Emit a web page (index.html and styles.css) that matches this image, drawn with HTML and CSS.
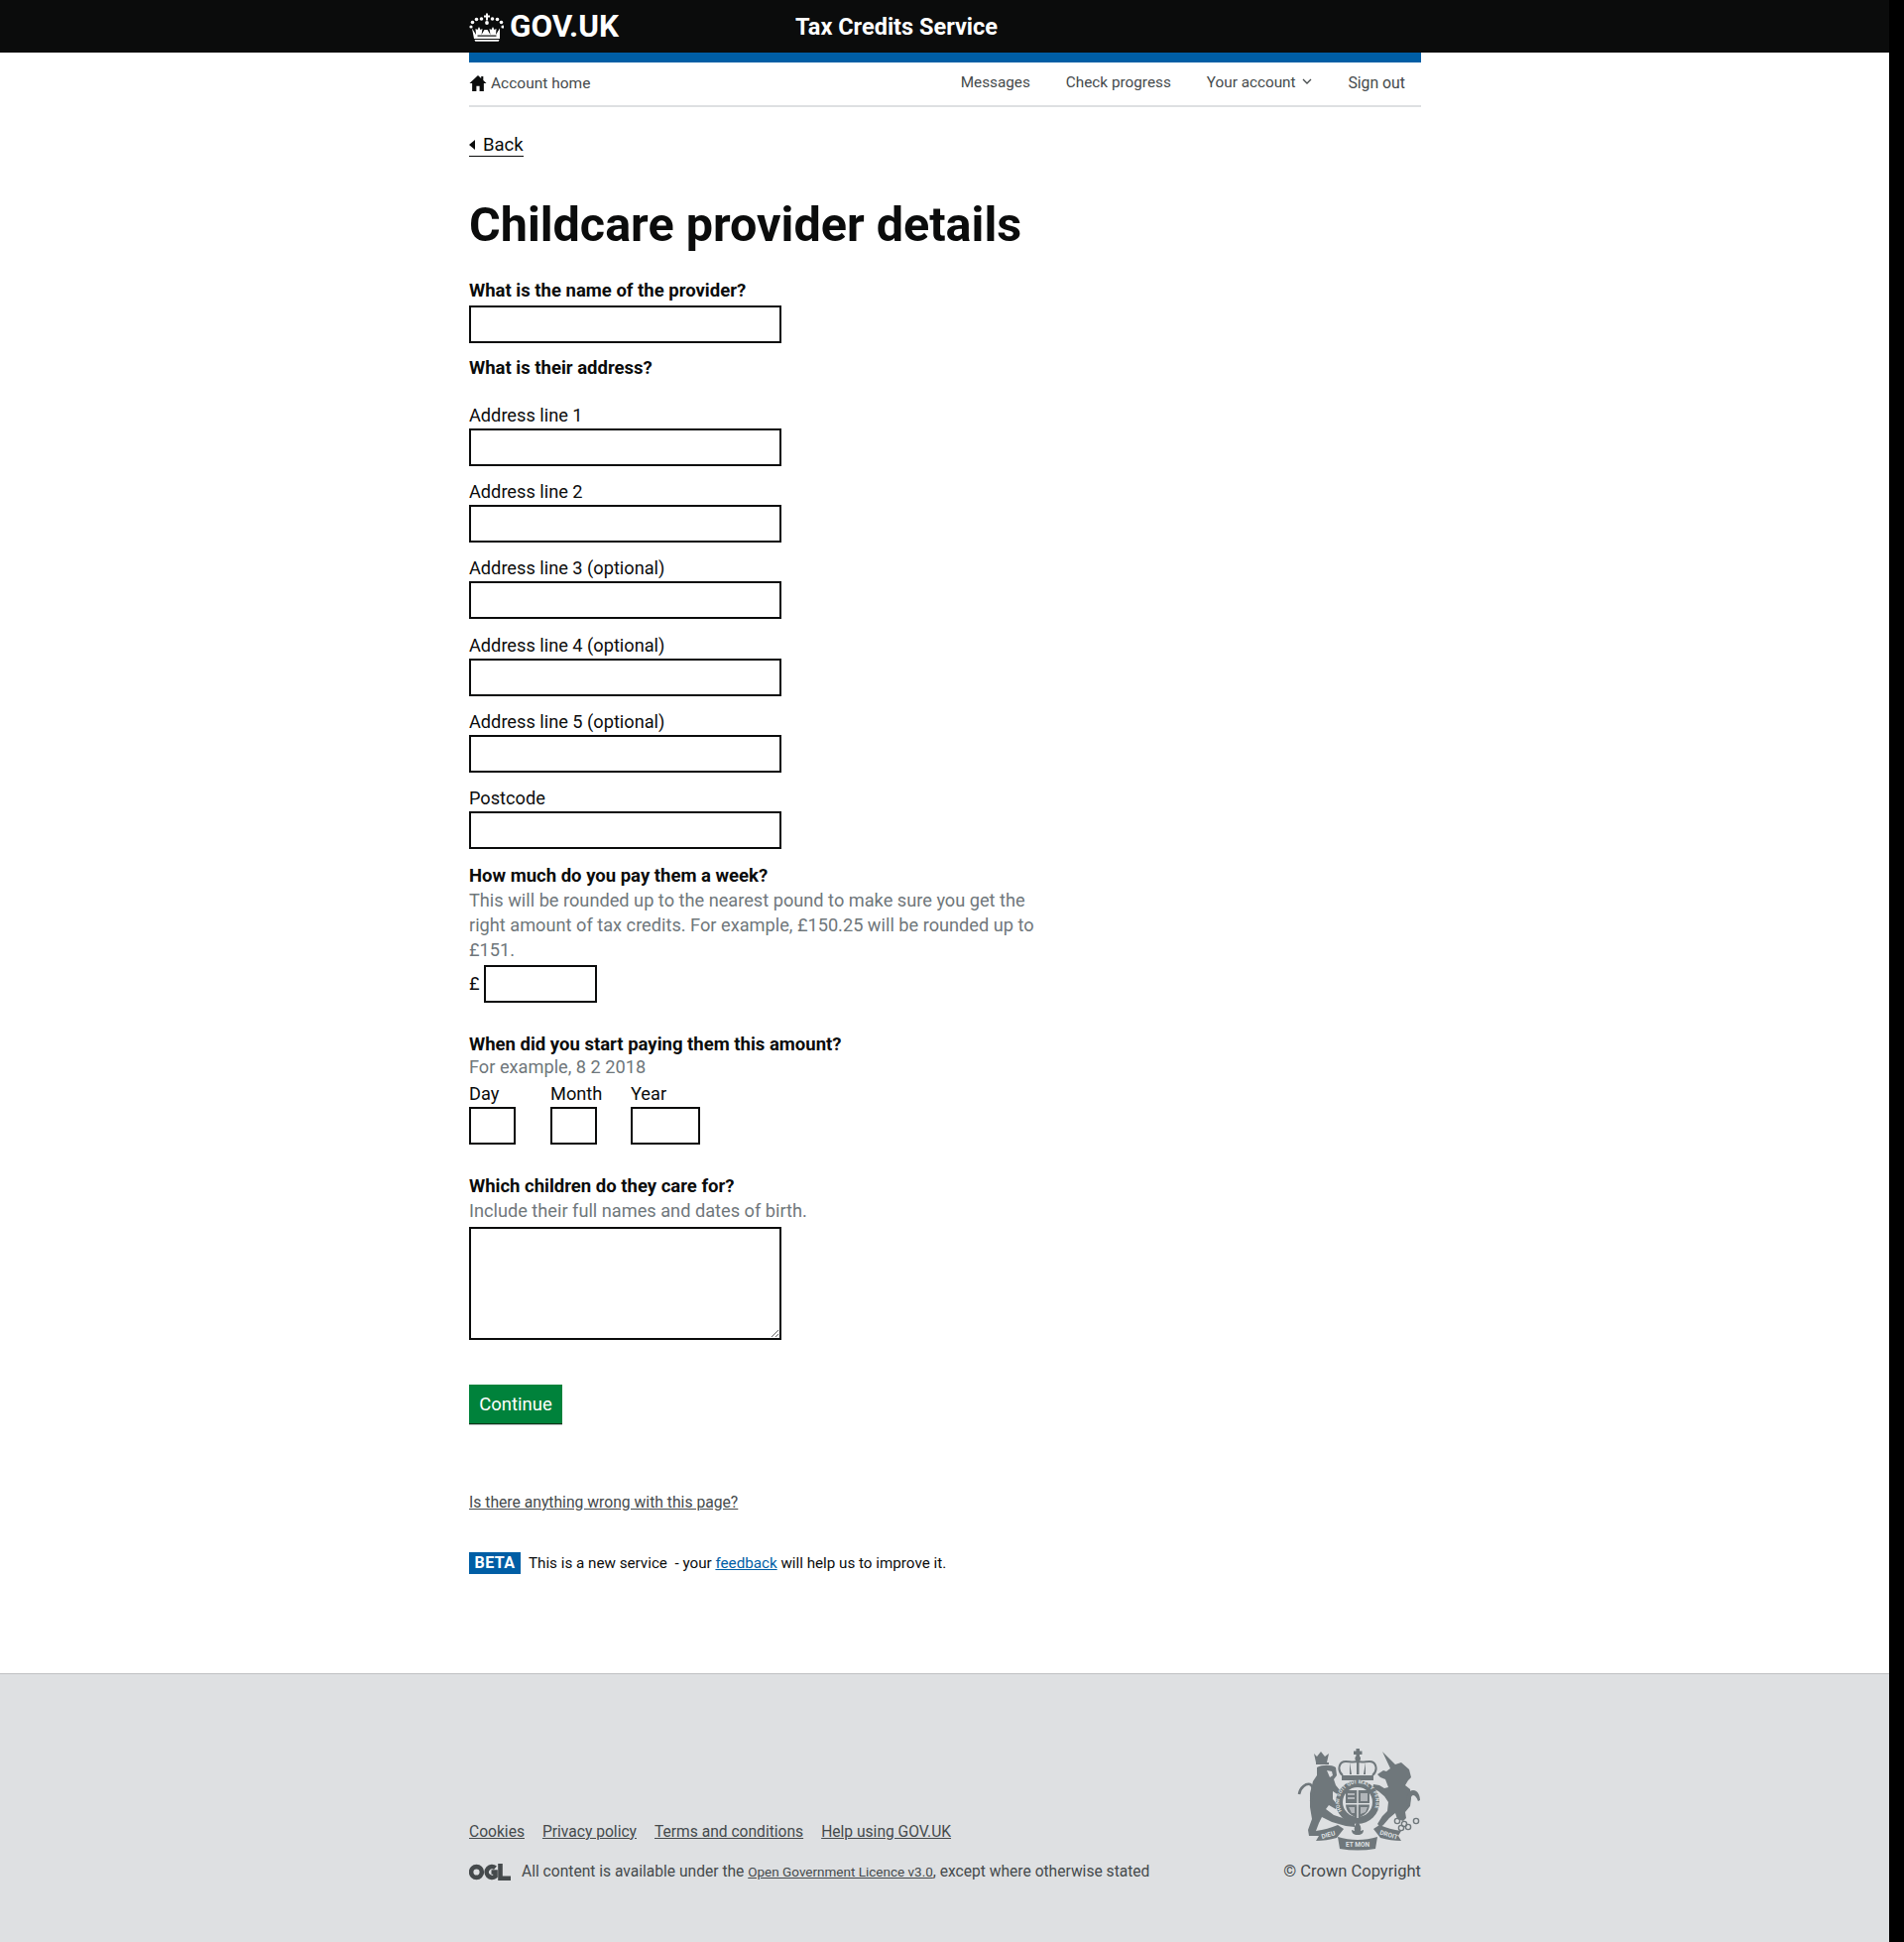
FILE: index.html
```html
<!DOCTYPE html>
<html lang="en">
<head>
  <meta charset="UTF-8" />
  <meta name="viewport" content="width=device-width, initial-scale=1.0"/>
  <title>Childcare provider details</title>
  <link rel="stylesheet" href="styles.css">
</head>
<body>
  <div class="page">
    <header class="top">
      <div class="wrap top-in">
        <a class="logo" href="#">
          <svg class="crown" viewBox="0 0 36 30" width="36" height="30">
            <g fill="#fff">
              <circle cx="19" cy="11" r="1.900"/>
              <circle cx="13.500" cy="7" r="1.800"/>
              <circle cx="24.500" cy="7" r="1.800"/>
              <circle cx="8.500" cy="7.500" r="1.800"/>
              <circle cx="29.500" cy="7.500" r="1.800"/>
              <circle cx="4.500" cy="10.500" r="1.800"/>
              <circle cx="33.500" cy="10.500" r="1.800"/>
              <circle cx="3" cy="15" r="1.600"/>
              <circle cx="35" cy="15" r="1.600"/>
              <rect x="18" y="1.500" width="2" height="7"/>
              <rect x="16" y="3.500" width="6" height="2"/>
              <path d="M4 16.500 8 23l-.5-6 2 1 1.500-3 1.500 3 2-1-1 6 3-5h3l3 5-1-6 2 1 1.500-3 1.500 3 2-1-.5 6 4-6.500L32 27H6z"/>
              <path d="M6.500 28h25l-.8 1.800H7.300z"/>
            </g>
            <g fill="#0b0c0c">
              <rect x="9.500" y="23.500" width="19" height="1.200"/>
            </g>
          </svg>
          <span>GOV.UK</span>
        </a>
        <a class="service" href="#">Tax Credits Service</a>
      </div>
    </header>

    <div class="wrap">
      <div class="blue-bar"></div>
      <nav class="acct">
        <a class="home" href="#">
          <svg viewBox="0 0 16 15" width="18" height="16"><path d="M8 0 0 7.500h2.500V15h4v-5h3v5h4V7.500H16l-3-2.800V1h-2v1.800z" fill="#0b0c0c"/></svg>
          Account home
        </a>
        <div class="acct-right">
          <a href="#">Messages</a>
          <a href="#">Check progress</a>
          <a href="#">Your account <svg class="chev" viewBox="0 0 10 6" width="10" height="6"><path d="M1 1l4 4 4-4" fill="none" stroke="#454a4c" stroke-width="1.300"/></svg></a>
          <a href="#">Sign out</a>
        </div>
      </nav>

      <a class="back" href="#">Back</a>
      <h1>Childcare provider details</h1>

      <form>
        <label class="bold" for="prov">What is the name of the provider?</label>
        <input class="txt" id="prov" type="text">

        <p class="bold addr-q">What is their address?</p>

        <label class="field-lbl first" for="a1">Address line 1</label>
        <input class="txt" id="a1" type="text">
        <label class="field-lbl" for="a2">Address line 2</label>
        <input class="txt" id="a2" type="text">
        <label class="field-lbl" for="a3">Address line 3 (optional)</label>
        <input class="txt" id="a3" type="text">
        <label class="field-lbl" for="a4">Address line 4 (optional)</label>
        <input class="txt" id="a4" type="text">
        <label class="field-lbl" for="a5">Address line 5 (optional)</label>
        <input class="txt" id="a5" type="text">
        <label class="field-lbl" for="pc">Postcode</label>
        <input class="txt" id="pc" type="text">

        <label class="bold pay-q" for="amt">How much do you pay them a week?</label>
        <p class="hint wide">This will be rounded up to the nearest pound to make sure you get the right amount of tax credits. For example, £150.25 will be rounded up to £151.</p>
        <div class="money">
          <span>£</span>
          <input class="txt amt" id="amt" type="text">
        </div>

        <p class="bold when-q">When did you start paying them this amount?</p>
        <p class="hint ex">For example, 8 2 2018</p>
        <div class="date">
          <div class="date-item">
            <label for="d">Day</label>
            <input class="txt" id="d" type="text">
          </div>
          <div class="date-item">
            <label for="m">Month</label>
            <input class="txt" id="m" type="text">
          </div>
          <div class="date-item yr">
            <label for="y">Year</label>
            <input class="txt" id="y" type="text">
          </div>
        </div>

        <label class="bold kids-q" for="kids">Which children do they care for?</label>
        <p class="hint">Include their full names and dates of birth.</p>
        <textarea class="kids" id="kids"></textarea>

        <button class="go" type="button">Continue</button>
      </form>

      <a class="wrong" href="#">Is there anything wrong with this page?</a>

      <div class="beta">
        <strong>BETA</strong>
        <span>This is a new service &nbsp;- your <a href="#">feedback</a> will help us to improve it.</span>
      </div>
    </div>

    <footer class="foot">
      <div class="wrap foot-in">
        <div class="foot-left">
          <ul>
            <li><a href="#">Cookies</a></li>
            <li><a href="#">Privacy policy</a></li>
            <li><a href="#">Terms and conditions</a></li>
            <li><a href="#">Help using GOV.UK</a></li>
          </ul>
          <p class="licence">
            <svg viewBox="0 0 42 17" width="42" height="17">
              <g fill="none" stroke="#454a4c" stroke-width="4.600">
                <circle cx="7.500" cy="8.500" r="5.400"/>
                <path d="M26.500 4.300a5.400 5.400 0 1 0 0 8.400V8.500h-4"/>
                <path d="M31.500 0v14.700H42"/>
              </g>
            </svg>
            <span>All content is available under the <a href="#">Open Government Licence v3.0</a>, except where otherwise stated</span>
          </p>
        </div>
        <div class="copy">
          <svg class="crest" viewBox="0 0 126 104" width="126" height="104">
            <defs>
              <path id="garter" d="M46 64a18.500 18.500 0 1 1 32 0"/>
            </defs>
            <g fill="#6f777b">
              <!-- royal crown -->
              <rect x="60.500" y="1" width="3.500" height="11"/>
              <rect x="58" y="3.500" width="8.500" height="3.500"/>
              <circle cx="62.200" cy="11" r="2.800"/>
              <path d="M47 28c-6-5-4-14 3-14 4 0 7 1 12 0 5 1 8 0 12 0 7 0 9 9 3 14" fill="none" stroke="#6f777b" stroke-width="2"/>
              <path d="M61 13h2.500v14H61zM54 15l2 12h-2zM70 15l-2 12h2z"/>
              <path d="M46 28h32v5H46z"/>
              <!-- lion -->
              <path d="M21 20c5-3 15-3 19 0l1 8-3 4 2 6 5 6-2 4-6-4v8l5 6-2 4-7-4-3 4 8 6 12 4 9 4v4l-9-1-14-4-10-5-3 6-3 8 6 2-2 3H13l-1-6 4-11-2-12V46l3-12 4-6z"/>
              <path d="M18 6l3 3 4-5 4 5 4-3-2 9H20z"/>
              <path d="M20 15h13v2H20z"/>
              <path d="M31 23l5 1 1 4-3 2z" fill="#dee0e2"/>
              <path d="M3 47c1-7 7-11 11-10 4 2 4 9 1 17" fill="none" stroke="#6f777b" stroke-width="2.600"/>
              <!-- unicorn -->
              <path d="M87 4l13 13 6-2 8 7 2 8-3 3-3 5 5 4 1 9-1 8-5 6 1 6-3 3-6-2-2-6-6 5-6 7-3 2-3-3 5-8 5-5 1-9-4-6-6-5-6-3 1-4 6 1 5 3 4-1-3-8-5-2-3-3 6-4 3 1 4-3z"/>
              <path d="M112 58c-2-8 1-15 6-15 5 0 7 6 7 10l-2 1c-1-3-3-6-5-6-3 1-3 6-3 11z"/>
              <g fill="none" stroke="#6f777b" stroke-width="1.400">
                <circle cx="102" cy="74" r="2.600"/>
                <circle cx="109" cy="77" r="2.600"/>
                <circle cx="121" cy="74" r="2.600"/>
                <circle cx="113" cy="80" r="2.600"/>
                <circle cx="106" cy="81" r="2.600"/>
              </g>
              <!-- garter and shield -->
              <circle cx="62" cy="55" r="22"/>
              <circle cx="62" cy="55" r="15" fill="#dee0e2"/>
              <path d="M50 43h24v14c0 8-6 12-12 14-6-2-12-6-12-14z"/>
              <path d="M61.300 43h1.400v28h-1.400zM50 56h24v1.400H50z" fill="#dee0e2"/>
              <path d="M52 46h7v2h-7zM52 50h7v2h-7zM65 46h7v8h-7zM53 60h6v6h-3zM65 60h7l-2 5-5 2z" fill="#dee0e2" opacity=".6"/>
              <!-- motto scroll -->
              <path d="M20 84c8-1 15-3 22-6l6 4-7 9c-7 2-14 3-21 3l3-5z"/>
              <path d="M106 84c-8-1-15-3-22-6l-6 4 7 9c7 2 14 3 21 3l-3-5z"/>
              <path d="M42 90c13 4 27 4 40 0l-2 12c-12 2-24 2-36 0z"/>
              <path d="M62 75c3 3 4 6 3 9l3-1c0 3-2 5-6 5s-6-2-6-5l3 1c-1-3 0-6 3-9z"/>
            </g>
            <g class="crest-txt" fill="#dee0e2">
              <text class="garter-txt"><textPath href="#garter">HONI SOIT QUI MAL Y PENSE</textPath></text>
              <text x="62" y="100" text-anchor="middle">ET MON</text>
              <text x="33" y="90" text-anchor="middle" transform="rotate(-16 33 90)">DIEU</text>
              <text x="93" y="90" text-anchor="middle" transform="rotate(16 93 90)">DROIT</text>
            </g>
          </svg>
          <span>© Crown Copyright</span>
        </div>
      </div>
    </footer>
  </div>
  <div class="edge"></div>
</body>
</html>
```

FILE: styles.css
```css
* {
  box-sizing: border-box;
}
html, body {
  margin: 0;
  padding: 0;
}
body {
  font-family: Roboto, Arial, sans-serif;
  color: #0b0c0c;
  background: #000;
  display: flex;
  min-height: 1958px;
}
.page {
  width: 1905px;
  background: #fff;
  display: flex;
  flex-direction: column;
}
.edge {
  width: 15px;
}
.wrap {
  width: 960px;
  margin-left: 473px;
}
a {
  color: inherit;
}

/* header */
.top {
  background: #0b0c0c;
  height: 53px;
}
.top-in {
  display: flex;
  align-items: center;
  height: 53px;
}
.logo {
  display: flex;
  align-items: center;
  gap: 6px;
  width: 329px;
  color: #fff;
  font-size: 31.500px;
  font-weight: 700;
  text-decoration: none;
}
.crown {
  display: block;
  margin-left: -1px;
}
.service {
  color: #fff;
  font-size: 23.500px;
  font-weight: 700;
  text-decoration: none;
}
.blue-bar {
  height: 10px;
  background: #005ea5;
}

/* account nav */
.acct {
  display: flex;
  justify-content: space-between;
  align-items: center;
  height: 45px;
  padding-bottom: 2px;
  border-bottom: 2px solid #dee0e2;
  font-size: 15.300px;
  color: #454a4c;
}
.acct a {
  text-decoration: none;
}
.home {
  display: flex;
  align-items: center;
  gap: 4px;
  font-size: 15.500px;
}
.acct-right {
  display: flex;
  gap: 36px;
  padding-right: 16px;
}
.acct-right a:last-child {
  font-size: 15.800px;
}
.chev {
  margin-left: 3px;
  vertical-align: 3px;
}

.back {
  display: inline-block;
  margin-top: 27px;
  padding-left: 14px;
  font-size: 18.500px;
  line-height: 22px;
  text-decoration: none;
  border-bottom: 1px solid #0b0c0c;
  position: relative;
}
.back::before {
  content: "";
  position: absolute;
  left: 0;
  top: 6px;
  border-top: 5px solid transparent;
  border-bottom: 5px solid transparent;
  border-right: 6px solid #0b0c0c;
}
h1 {
  margin: 41px 0 0;
  font-size: 48.500px;
  line-height: 56px;
  font-weight: 700;
}

/* form */
form {
  display: flex;
  flex-direction: column;
  align-items: flex-start;
  font-size: 18.200px;
}
.bold {
  display: block;
  margin: 0 0 -1px;
  padding-top: 1px;
  font-size: 18.500px;
  line-height: 25px;
  font-weight: 700;
}
form > .bold:first-child {
  margin-top: 25px;
  margin-bottom: 2px;
}
.txt {
  display: block;
  width: 315px;
  height: 38px;
  border: 2px solid #0b0c0c;
  background: #fff;
  border-radius: 0;
  margin: 0;
}
.addr-q {
  margin-top: 12px;
}
.field-lbl {
  display: block;
  margin-top: 13.200px;
  line-height: 25px;
  height: 26px;
}
.field-lbl.first {
  margin-top: 23px;
  height: 26px;
}
.pay-q {
  margin-top: 14px;
}
.hint {
  margin: 0;
  color: #6f777b;
  line-height: 25px;
}
.wide {
  width: 580px;
}
.money {
  display: flex;
  align-items: center;
  gap: 4px;
  margin-top: 3px;
}
.amt {
  width: 114px;
}
.when-q {
  margin-top: 29px;
}
.ex {
  line-height: 21px;
}
.date {
  display: flex;
  gap: 35px;
  margin-top: 4px;
}
.date-item {
  width: 47px;
}
.date-item.yr {
  width: 70px;
  margin-left: -1px;
}
.date-item label {
  display: block;
  line-height: 25px;
  height: 26px;
  white-space: nowrap;
}
.date-item .txt {
  width: 47px;
}
.date-item.yr .txt {
  width: 70px;
}
.kids-q {
  margin-top: 29px;
}
.kids {
  display: block;
  width: 315px;
  height: 114px;
  margin-top: 4px;
  border: 2px solid #0b0c0c;
  background: #fff;
  border-radius: 0;
}
.go {
  display: block;
  margin-top: 45px;
  width: 94px;
  height: 39px;
  padding: 1px 0 0;
  border: none;
  border-radius: 0;
  background: #00823b;
  box-shadow: 0 1px 0 #003618, 0 2px 0 #bfc1c3;
  color: #fff;
  font-family: inherit;
  font-size: 18.500px;
}

.wrong {
  display: inline-block;
  margin-top: 70px;
  font-size: 15.700px;
  line-height: 20px;
  color: #454a4c;
}
.beta {
  display: flex;
  align-items: center;
  gap: 8px;
  margin-top: 40px;
  font-size: 15.200px;
}
.beta strong {
  background: #005ea5;
  color: #fff;
  width: 52px;
  height: 22px;
  line-height: 22px;
  text-align: center;
  font-size: 16px;
  letter-spacing: .4px;
}
.beta a {
  color: #005ea5;
}

/* footer */
.foot {
  margin-top: auto;
  height: 271px;
  background: #dee0e2;
  border-top: 1px solid #bfc1c3;
  color: #454a4c;
  font-size: 15.600px;
}
.foot-in {
  display: flex;
  justify-content: space-between;
  align-items: flex-end;
  padding-top: 74px;
}
.foot ul {
  display: flex;
  gap: 18px;
  margin: 0;
  padding: 0;
  list-style: none;
}
.licence {
  display: flex;
  align-items: center;
  gap: 11px;
  margin: 22px 0 0;
}
.licence a {
  font-size: 13.500px;
}
.copy {
  display: flex;
  flex-direction: column;
  align-items: flex-end;
  gap: 11px;
  font-size: 16.500px;
}
.crest {
  display: block;
}
.crest-txt {
  font-size: 6.500px;
  font-weight: 700;
}
.garter-txt {
  font-size: 5px;
  letter-spacing: .3px;
}
```
